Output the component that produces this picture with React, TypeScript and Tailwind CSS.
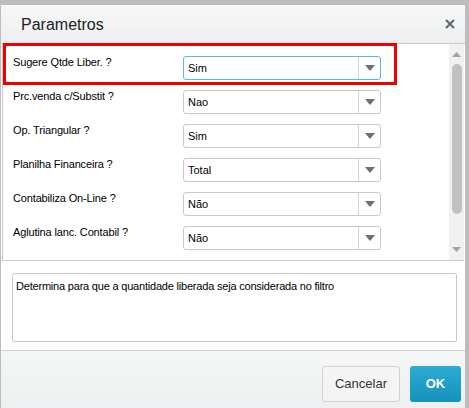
import React from 'react';

interface Param {
  label: string;
  value: string;
  focused?: boolean;
}

const PARAMS: Param[] = [
  { label: 'Sugere Qtde Liber. ?', value: 'Sim', focused: true },
  { label: 'Prc.venda c/Substit ?', value: 'Nao' },
  { label: 'Op. Triangular ?', value: 'Sim' },
  { label: 'Planilha Financeira ?', value: 'Total' },
  { label: 'Contabiliza On-Line ?', value: 'Não' },
  { label: 'Aglutina lanc. Contabil ?', value: 'Não' },
];

const Caret: React.FC = () => (
  <svg width="10" height="6" viewBox="0 0 10 6">
    <path d="M0 0 L10 0 L5 6 Z" fill="#6b6f7a" />
  </svg>
);

const SelectBox: React.FC<{ value: string; focused?: boolean }> = ({ value, focused }) => (
  <div
    className={`flex h-[24px] w-[198px] items-stretch rounded-[3px] border bg-white ${
      focused ? 'border-[#5ab9d8]' : 'border-[#c9c9c9]'
    }`}
  >
    <span className="flex flex-1 items-center pl-[4px] text-[11px] text-black">{value}</span>
    <span className="flex w-[22px] items-center justify-center border-l border-[#d4d4d4]">
      <Caret />
    </span>
  </div>
);

export default function App() {
  return (
    <div
      className="h-[408px] w-[469px] overflow-hidden bg-[#bdbdbd] pt-[5px] pl-[1px]"
      style={{ fontFamily: '"Liberation Sans", Arial, sans-serif' }}
    >
      <div className="relative flex h-[420px] w-[464px] flex-col bg-white">
        {/* Header */}
        <div className="flex h-[39px] items-center justify-between border-b border-[#cacaca] bg-gradient-to-b from-[#f8f8f8] to-[#eceeef] pl-[20px] pr-[10px]">
          <span className="pt-[1px] text-[16px] text-[#222]">Parametros</span>
          <svg width="10" height="10" viewBox="0 0 10 10">
            <path d="M1 1 L9 9 M9 1 L1 9" stroke="#5f6570" strokeWidth="2" />
          </svg>
        </div>

        {/* Parameter list with scrollbar */}
        <div className="ml-[1px] mr-[1px] flex h-[217px] border-b border-l border-[#c9c9c9]">
          <div className="flex flex-1 flex-col gap-[10px] pt-[12px]">
            {PARAMS.map((p) => (
              <div key={p.label} className="flex items-start">
                <span className="-mt-[1px] w-[180px] pl-[10px] text-[11px] leading-[14px] tracking-[-0.15px] text-black">
                  {p.label}
                </span>
                <SelectBox value={p.value} focused={p.focused} />
              </div>
            ))}
          </div>
          <div className="flex w-[15px] flex-col items-center bg-[#f1f1f1]">
            <svg width="9" height="5" viewBox="0 0 9 5" className="mt-[8px]">
              <path d="M0 5 L9 5 L4.5 0 Z" fill="#a3a3a3" />
            </svg>
            <div className="mt-[7px] h-[150px] w-[10px] rounded-[5px] bg-[#c1c1c1]" />
            <div className="flex-1" />
            <svg width="9" height="5" viewBox="0 0 9 5" className="mb-[8px]">
              <path d="M0 0 L9 0 L4.5 5 Z" fill="#a3a3a3" />
            </svg>
          </div>
        </div>

        {/* Description */}
        <div className="px-[11px] pt-[12px] pb-[8px]">
          <div className="h-[69px] w-[445px] rounded-[2px] border border-[#c9c9c9] px-[3px] pt-[4px] text-[11px] tracking-[-0.2px] text-black">
            Determina para que a quantidade liberada seja considerada no filtro
          </div>
        </div>

        {/* Footer */}
        <div className="flex flex-1 items-start justify-end gap-[10px] border-t border-[#cfcfcf] bg-gradient-to-b from-[#f5f6f6] to-[#eceeef] pt-[15px] pr-[4px]">
          <button className="h-[36px] w-[78px] rounded-[3px] border border-[#d3d3d3] bg-[#f4f4f4] text-[13px] text-[#333]">
            Cancelar
          </button>
          <button className="h-[36px] w-[51px] rounded-[3px] bg-gradient-to-b from-[#2cabd3] to-[#1592bd] text-[13px] font-bold text-white">
            OK
          </button>
        </div>

        {/* Red highlight */}
        <div className="pointer-events-none absolute top-[38px] left-[2px] h-[42px] w-[394px] border-[3px] border-[#ee0000]" />
      </div>
    </div>
  );
}
